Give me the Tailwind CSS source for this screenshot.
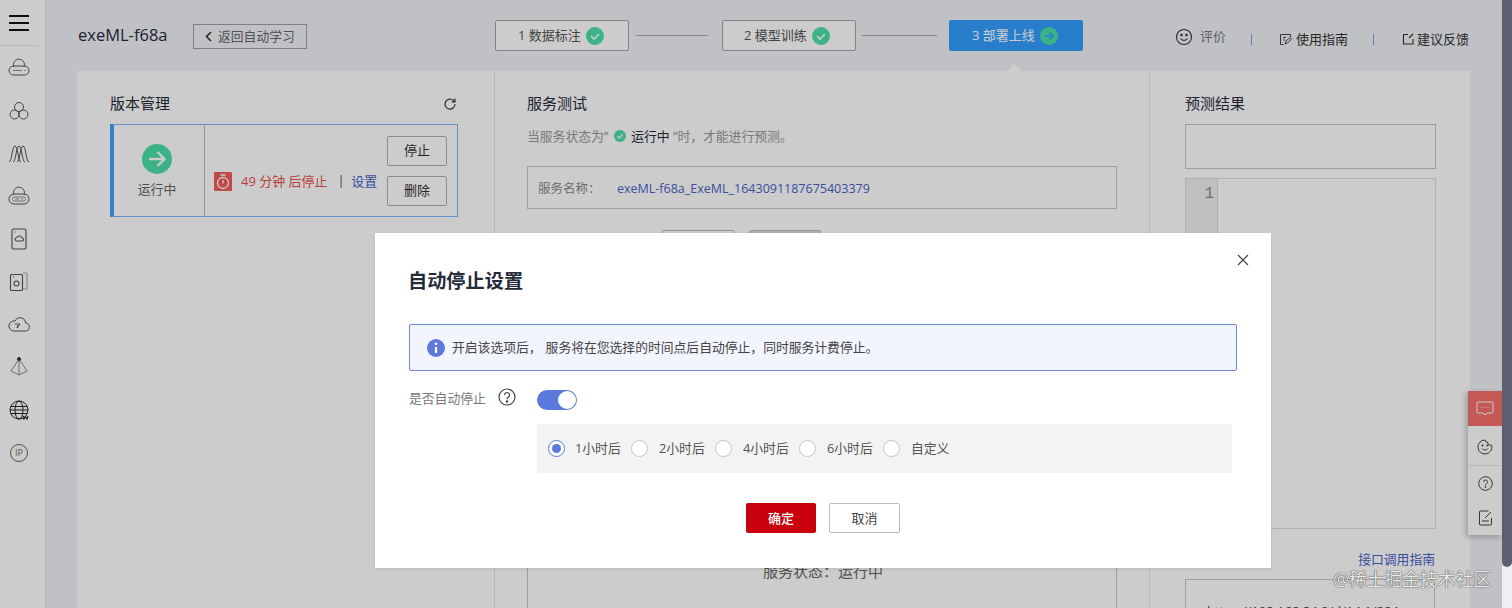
<!DOCTYPE html>
<html lang="zh">
<head>
    <meta charset="UTF-8">
    <title>自动停止设置</title>
    <script src="https://cdn.jsdelivr.net/npm/@tailwindcss/browser@4"></script>
</head>
<body class="font-['Open_Sans','Noto_Sans_CJK_SC',sans-serif] bg-[#f0f2f7] text-[#252b3a] overflow-hidden">
<div class="relative flex h-[608px] w-[1512px] overflow-hidden">

    <!-- sidebar -->
    <aside class="w-[45px] shrink-0 bg-white flex flex-col items-center text-[#333] shadow-[1px_0_2px_rgba(0,0,0,0.06)]">
        <div class="h-[46px] w-[38px] -ml-[7px] border-b border-[#e8e8e8] flex flex-col justify-center items-center gap-[5px] pt-[1px]">
            <span class="block w-[20px] h-[2px] bg-[#111]"></span>
            <span class="block w-[20px] h-[2px] bg-[#111]"></span>
            <span class="block w-[20px] h-[2px] bg-[#111]"></span>
        </div>
        <div class="w-[38px] -ml-[7px] pt-[1px] grid auto-rows-[42.700px] place-items-center">
            <svg class="w-[22px] h-[22px]" viewBox="0 0 22 22" fill="none" stroke="#555" stroke-width="1"><path d="M6 10a5.500 5.500 0 1 1 10 0"/><rect x="1" y="9" width="20" height="9" rx="4.500"/><path d="M5 13.500h9M16 13.500h1.500" stroke="#777" stroke-width=".8"/></svg>
            <svg class="w-[22px] h-[22px]" viewBox="0 0 22 22" fill="none" stroke="#555" stroke-width="1"><circle cx="11" cy="7" r="4.500"/><circle cx="6.500" cy="14.500" r="4.500"/><circle cx="15.500" cy="14.500" r="4.500"/></svg>
            <svg class="w-[22px] h-[19px]" viewBox="0 0 22 19" fill="none" stroke="#555" stroke-width="1"><path d="M1 18C4 18 4 2 7 2s3 16 6 16M5 18C8 18 8 2 11 2s3 16 6 16M9 18C12 18 12 2 15 2s3 16 6 16"/></svg>
            <svg class="w-[22px] h-[22px]" viewBox="0 0 22 22" fill="none" stroke="#555" stroke-width="1"><path d="M6 10a5.500 5.500 0 1 1 10 0"/><rect x="1" y="9" width="20" height="10" rx="5"/><rect x="4.500" y="12" width="13" height="4" rx="1.500" stroke="#777" stroke-width=".8"/><path d="M7 14h4M13 14h2" stroke="#777" stroke-width=".8"/></svg>
            <svg class="w-[18px] h-[22px]" viewBox="0 0 18 22" fill="none" stroke="#555" stroke-width="1.100"><rect x="2" y="1" width="14" height="20" rx="1.500"/><path d="M6.500 13h5.500a1.500 1.500 0 0 0 0-3 2.800 2.800 0 0 0-5.200-.5A1.800 1.800 0 0 0 6.500 13zM4.500 4h1"/></svg>
            <svg class="w-[20px] h-[22px]" viewBox="0 0 20 22" fill="none" stroke="#555" stroke-width="1.100"><rect x="1.500" y="3.500" width="12" height="16" rx="1"/><path d="M14 2h3a1 1 0 0 1 1 1v14a1 1 0 0 1-1 1h-3" stroke="#aaa"/><circle cx="7.500" cy="12.500" r="2.500"/><path d="M4 6h1"/></svg>
            <svg class="w-[22px] h-[20px]" viewBox="0 0 22 20" fill="none" stroke="#555" stroke-width="1"><path d="M5 17h12a4 4 0 0 0 .6-8 5.500 5.500 0 0 0-10.500-2A5 5 0 0 0 5 17z"/><path d="M7 10h5l-3 4 1-3"/></svg>
            <svg class="w-[20px] h-[22px]" viewBox="0 0 20 22" fill="none" stroke="#888" stroke-width="1"><path d="M10 3 2 15l8 4 8-4zM10 3v16"/><circle cx="10" cy="3" r="1.500" fill="#333" stroke="#333"/></svg>
            <svg class="w-[22px] h-[22px]" viewBox="0 0 22 22" fill="none" stroke="#222" stroke-width="1"><circle cx="11" cy="11" r="9"/><ellipse cx="11" cy="11" rx="4" ry="9"/><path d="M3 7.500h16M2 11h18M3 14.500h16"/><path d="m15 17 1 3 1.500-2 1.500 2 1-3" stroke-width="1.200"/></svg>
            <div class="w-[18px] h-[18px] rounded-full border border-[#666] flex items-center justify-center text-[9px] text-[#666] leading-none">IP</div>
        </div>
    </aside>

    <!-- main -->
    <main class="w-[1457px] shrink-0 px-[32px] flex flex-col">
        <header class="h-[71px] shrink-0 flex items-start">
            <div class="w-[418px] shrink-0 flex items-center h-[25px] mt-[24px]">
                <h1 class="w-[116px] pl-[1px] -mt-[3px] text-[16.500px] font-medium leading-[22px] whitespace-nowrap">exeML-f68a</h1>
                <div class="w-[114px] h-[25px] border border-[#9ea1a8] flex items-center pl-[11px] gap-[6px] text-[12.800px] text-[#666]">
                    <svg class="w-[7px] h-[11px]" viewBox="0 0 7 11" fill="none" stroke="#333" stroke-width="1.600"><path d="M6 1 1.500 5.500 6 10"/></svg>
                    <span class="whitespace-nowrap leading-none">返回自动学习</span>
                </div>
            </div>
            <div class="w-[588px] shrink-0 flex items-center mt-[20px] h-[31px]">
                <div class="w-[134px] h-[31px] bg-white border border-[#a4a6aa] rounded-[2px] flex items-center pl-[22px] gap-[5px] text-[13px] text-[#555]">
                    <span class="whitespace-nowrap leading-none">1 数据标注</span>
                    <svg class="w-[18px] h-[18px]" viewBox="0 0 18 18"><circle cx="9" cy="9" r="9" fill="#4cdfa9"/><path d="m5 9 3 3 5-5" fill="none" stroke="#fff" stroke-width="1.600"/></svg>
                </div>
                <span class="ml-[7px] w-[72px] h-px bg-[#a9abad]"></span>
                <div class="ml-[14px] w-[134px] h-[31px] bg-white border border-[#a4a6aa] rounded-[2px] flex items-center pl-[21px] gap-[5px] text-[13px] text-[#555]">
                    <span class="whitespace-nowrap leading-none">2 模型训练</span>
                    <svg class="w-[18px] h-[18px]" viewBox="0 0 18 18"><circle cx="9" cy="9" r="9" fill="#4cdfa9"/><path d="m5 9 3 3 5-5" fill="none" stroke="#fff" stroke-width="1.600"/></svg>
                </div>
                <span class="ml-[6px] w-[75px] h-px bg-[#a9abad]"></span>
                <div class="relative ml-[12px] w-[134px] h-[31px] bg-[#349eff] rounded-[2px] flex items-center pl-[23px] gap-[5px] text-[13px] text-white">
                    <span class="whitespace-nowrap leading-none">3 部署上线</span>
                    <svg class="w-[18px] h-[18px]" viewBox="0 0 18 18"><circle cx="9" cy="9" r="9" fill="#4cdfa9"/><path d="M4.500 9h8M9.500 5.500 13 9l-3.500 3.500" fill="none" stroke="#349eff" stroke-width="1.700"/></svg>
                    <span class="absolute left-[58px] top-[44px] w-0 h-0 border-x-[7px] border-x-transparent border-b-[7px] border-b-white"></span>
                </div>
            </div>
            <div class="flex-1 flex items-center text-[13px] text-[#333] mt-[28px] h-[20px] whitespace-nowrap leading-none">
                <svg class="ml-[92px] w-[18px] h-[18px] -mt-[3px]" viewBox="0 0 18 18" fill="none" stroke="#333" stroke-width="1.100"><circle cx="9" cy="9" r="7.500"/><path d="M5.500 10.500c1.500 2.500 5.500 2.500 7 0"/><circle cx="6.500" cy="7" r=".7" fill="#333"/><circle cx="11.500" cy="7" r=".7" fill="#333"/></svg>
                <span class="ml-[7px] -mt-[3px] text-[#777]">评价</span>
                <span class="ml-[25px] w-px h-[11px] bg-[#6ea2f0] mt-[3px]"></span>
                <svg class="ml-[27px] w-[13px] h-[13px] mt-[2px]" viewBox="0 0 13 13" fill="none" stroke="#444" stroke-width="1"><path d="M11.500 4V1.500h-10v10h3"/><path d="M4 4.500h3M4 7h2"/><path d="m6 11 1-3 4-3.500 1.500 1.500-4 4z"/></svg>
                <span class="ml-[4px] mt-[3px]">使用指南</span>
                <span class="ml-[25px] w-px h-[11px] bg-[#6ea2f0] mt-[3px]"></span>
                <svg class="ml-[28px] w-[12px] h-[12px] mt-[1px]" viewBox="0 0 12 12" fill="none" stroke="#333" stroke-width="1.100"><path d="M6 1.500H1.500v9.500h9.500V6"/><path d="m7 5 4-4"/></svg>
                <span class="ml-[3px] mt-[3px]">建议反馈</span>
            </div>
        </header>

        <div class="flex-1 flex bg-white">
            <!-- version panel -->
            <section class="w-[418px] shrink-0 border-r border-[#e5e5e5] pl-[33px] pr-[36px]">
                <div class="h-[53px] pt-[12px] flex items-center justify-between pr-[1px]">
                    <h2 class="text-[15px] leading-none">版本管理</h2>
                    <svg class="w-[14px] h-[14px]" viewBox="0 0 14 14" fill="none" stroke="#333" stroke-width="1.100"><path d="M12 7a5 5 0 1 1-1.500-3.500L12 5M12 1.500V5H8.500"/></svg>
                </div>
                <div class="h-[93px] border border-[#78b8fb] border-l-[4px] border-l-[#3a9fff] flex">
                    <div class="w-[91px] shrink-0 border-r border-[#bbb] flex flex-col items-center pt-[19px] pr-[4px]">
                        <svg class="w-[30px] h-[30px]" viewBox="0 0 30 30"><circle cx="15" cy="15" r="15" fill="#4cdfa9"/><path d="M7 15h15M15.500 8l7 7-7 7" fill="none" stroke="#fff" stroke-width="2.400"/></svg>
                        <span class="mt-[9px] text-[12.800px] text-[#666] leading-none">运行中</span>
                    </div>
                    <div class="flex-1 flex pl-[9px]">
                        <div class="flex items-center h-[20px] mt-[46px] text-[13px] whitespace-nowrap leading-none">
                            <svg class="w-[18px] h-[19px]" viewBox="0 0 18 19"><rect width="18" height="19" rx="1" fill="#f25c5c"/><circle cx="9" cy="11" r="5.500" fill="none" stroke="#fff" stroke-width="1.300"/><path d="M9 8v3.500M6.500 3h5" stroke="#fff" stroke-width="1.300"/></svg>
                            <span class="ml-[9px] text-[#e8504f]">49 分钟 后停止</span>
                            <span class="ml-[10px] text-[#444] text-[12px]">|</span>
                            <span class="ml-[7px] text-[#4a63c8]">设置</span>
                        </div>
                        <div class="ml-auto mr-[10px] flex flex-col gap-[10px] pt-[11px]">
                            <div class="w-[60px] h-[30px] border border-[#b0b0b0] rounded-[2px] flex items-center justify-center text-[13px] text-[#333]">停止</div>
                            <div class="w-[60px] h-[30px] border border-[#b0b0b0] rounded-[2px] flex items-center justify-center text-[13px] text-[#333]">删除</div>
                        </div>
                    </div>
                </div>
            </section>

            <!-- service test panel -->
            <section class="w-[655px] shrink-0 border-r border-[#e5e5e5] pl-[32px] pr-[32px] flex flex-col">
                <h2 class="h-[53px] pt-[12px] flex items-center text-[15px] leading-none">服务测试</h2>
                <p class="h-[20px] mt-[2px] flex items-center text-[12.800px] text-[#999] whitespace-nowrap leading-none">当服务状态为”
                    <svg class="ml-[6px] mr-[5px] w-[12px] h-[12px] -mt-[1px]" viewBox="0 0 12 12"><circle cx="6" cy="6" r="6" fill="#4cdfa9"/><path d="m3.300 6 2 2 3.400-3.500" fill="none" stroke="#fff" stroke-width="1.200"/></svg>
                    <span class="text-[#252b3a]">运行中</span>&nbsp;”时&#xFF0C;才能进行预测。</p>
                <div class="mt-[20px] h-[43px] border border-[#c9c9c9] flex items-center pl-[10px] pt-[3px] text-[12.500px] leading-none whitespace-nowrap">
                    <span class="w-[79px] text-[#888]">服务名称&#xFF1A;</span>
                    <span class="text-[#4a63c8]">exeML-f68a_ExeML_1643091187675403379</span>
                </div>
                <div class="mt-[21px] flex pl-[135px] gap-[14px]">
                    <div class="w-[73px] h-[30px] border border-[#bbb] rounded-[2px]"></div>
                    <div class="w-[72px] h-[30px] border border-[#bbb] bg-[#ddd] rounded-[2px]"></div>
                </div>
                <div class="mt-[35px] flex-1 border border-[#c9c9c9] min-h-[80px] relative">
                    <span class="absolute left-[235px] top-[268px] text-[15px] text-[#666] leading-none whitespace-nowrap">服务状态&#xFF1A;运行中</span>
                </div>
            </section>

            <!-- result panel -->
            <section class="flex-1 pl-[35px] pr-[34px] flex flex-col">
                <h2 class="h-[53px] pt-[12px] flex items-center text-[15px] leading-none">预测结果</h2>
                <div class="h-[45px] border border-[#c4c4c4]"></div>
                <div class="mt-[9px] h-[351px] border border-[#dcdcdc] flex">
                    <div class="w-[32px] bg-[#f0f0f0] border-r border-[#ddd] text-right pr-[3px] pt-[5px] font-['Liberation_Mono',monospace] text-[16px] text-[#888] leading-[20px]">1</div>
                </div>
                <a class="mt-[24px] mr-[1px] h-[16px] self-end text-[12.800px] text-[#4a63c8] leading-none whitespace-nowrap">接口调用指南</a>
                <div class="mt-[10px] mr-[1px] h-[60px] border border-[#c9c9c9] pl-[21px] pt-[25px] text-[13px] text-[#444] leading-none whitespace-nowrap overflow-hidden">https://192.168.24.0/d/14.1/884</div>
            </section>
        </div>
    </main>

    <!-- scrollbar -->
    <div class="w-[10px] shrink-0 bg-[#eef0f5]">
        <div class="h-[567px] bg-[#5d6070] rounded-b-[5px]"></div>
    </div>

    <!-- floating tools -->
    <div class="absolute left-[1468px] top-[391px] w-[34px] bg-white shadow-[-2px_2px_6px_rgba(0,0,0,0.25)] flex flex-col items-center">
        <div class="w-full h-[35px] bg-[#f66f6a] flex items-center justify-center">
            <svg class="w-[18px] h-[17px]" viewBox="0 0 18 17" fill="none" stroke="#fff" stroke-width="1"><path d="M2 2h14a1 1 0 0 1 1 1v9a1 1 0 0 1-1 1h-5l-2 2-2-2H2a1 1 0 0 1-1-1V3a1 1 0 0 1 1-1z"/><path d="M5.500 7.500h1M8.500 7.500h1M11.500 7.500h1"/></svg>
        </div>
        <div class="w-full h-[40px] border-b border-[#e5e5e5] flex items-center justify-center pt-[2px]">
            <svg class="w-[16px] h-[16px]" viewBox="0 0 16 16" fill="none" stroke="#444" stroke-width="1"><path d="M8 1a7 7 0 1 0 6.800 5.500L13 6a2 2 0 0 1-2-2.500A3 3 0 0 1 8 1z"/><path d="M5 9.500c1.500 2 4.500 2 6 0"/><circle cx="5.500" cy="6.500" r=".6" fill="#444"/><circle cx="10.500" cy="6.500" r=".6" fill="#444"/></svg>
        </div>
        <div class="w-full h-[35px] flex items-center justify-center">
            <svg class="w-[15px] h-[15px]" viewBox="0 0 15 15" fill="none" stroke="#444" stroke-width="1"><circle cx="7.500" cy="7.500" r="6.800"/><path d="M5.500 6a2 2 0 1 1 3 1.700c-.7.400-1 .8-1 1.600"/><circle cx="7.500" cy="11" r=".5" fill="#444"/></svg>
        </div>
        <div class="w-full h-[34px] flex items-center justify-center pb-[1px]">
            <svg class="w-[15px] h-[16px]" viewBox="0 0 15 16" fill="none" stroke="#444" stroke-width="1"><path d="M13.500 8v6a1 1 0 0 1-1 1h-10a1 1 0 0 1-1-1V2a1 1 0 0 1 1-1h8"/><path d="M4 11h7M7 8l6-6"/></svg>
        </div>
    </div>

    <!-- dialog mask -->
    <div class="absolute left-0 top-0 w-[1502px] h-full bg-black/20">
        <div class="absolute left-[375px] top-[233px] w-[896px] h-[335px] bg-white pl-[34px] pr-[34px] text-[12.800px] shadow-[0_1px_3px_rgba(0,0,0,0.1)]">
            <svg class="absolute right-[22px] top-[21px] w-[12px] h-[12px]" viewBox="0 0 12 12" fill="none" stroke="#444" stroke-width="1.200"><path d="m1 1 10 10M11 1 1 11"/></svg>
            <h3 class="h-[91px] -ml-[1px] flex items-center text-[19.200px] font-semibold leading-none pt-[5px]">自动停止设置</h3>
            <div class="w-[828px] h-[47px] bg-[#f2f5fd] border border-[#6f8ad8] rounded-[2px] flex items-center pl-[17px] text-[#444] whitespace-nowrap leading-none">
                <svg class="w-[18px] h-[18px] mr-[7px] shrink-0" viewBox="0 0 18 18"><circle cx="9" cy="9" r="9" fill="#5d7bdc"/><path d="M9 8v6" stroke="#fff" stroke-width="2.200"/><circle cx="9" cy="4.800" r="1.300" fill="#fff"/></svg>
                <span>开启该选项后&#xFF0C;</span><span class="ml-[4px]">服务将在您选择的时间点后自动停止&#xFF0C;同时服务计费停止。</span>
            </div>
            <div class="flex items-center h-[20px] mt-[19px] leading-none whitespace-nowrap">
                <span class="w-[89px] text-[#777] -mt-[3px]">是否自动停止</span>
                <svg class="w-[18px] h-[18px] -mt-[6px]" viewBox="0 0 18 18" fill="none" stroke="#444" stroke-width="1.200"><circle cx="9" cy="9" r="8"/><path d="M6.500 7a2.500 2.500 0 1 1 3.700 2.200c-.8.500-1.200 1-1.200 2"/><circle cx="9" cy="13.500" r=".7" fill="#444"/></svg>
                <span class="ml-[21px] w-[40px] h-[20px] bg-[#5b78dc] rounded-full flex items-center justify-end pr-[1px]">
                    <span class="block w-[18px] h-[18px] rounded-full bg-white"></span>
                </span>
            </div>
            <div class="ml-[128px] mt-[14px] w-[695px] h-[49px] bg-[#f3f3f3] flex items-center pl-[11px] leading-none whitespace-nowrap text-[#555]">
                <span class="w-[17px] h-[17px] rounded-full border border-[#5b78dc] bg-white flex items-center justify-center"><span class="block w-[9px] h-[9px] rounded-full bg-[#5b78dc]"></span></span>
                <span class="ml-[10px] w-[47px]">1小时后</span>
                <span class="ml-[9px] w-[17px] h-[17px] rounded-full border border-[#c4c4c4] bg-white"></span>
                <span class="ml-[11px] w-[46px]">2小时后</span>
                <span class="ml-[10px] w-[17px] h-[17px] rounded-full border border-[#c4c4c4] bg-white"></span>
                <span class="ml-[11px] w-[46px]">4小时后</span>
                <span class="ml-[10px] w-[17px] h-[17px] rounded-full border border-[#c4c4c4] bg-white"></span>
                <span class="ml-[11px] w-[46px]">6小时后</span>
                <span class="ml-[10px] w-[17px] h-[17px] rounded-full border border-[#c4c4c4] bg-white"></span>
                <span class="ml-[11px]">自定义</span>
            </div>
            <div class="flex justify-center gap-[13px] mt-[30px] text-[13px] leading-none">
                <div class="w-[70px] h-[30px] bg-[#c7000b] rounded-[2px] text-white font-medium flex items-center justify-center">确定</div>
                <div class="w-[71px] h-[30px] bg-white border border-[#bbb] rounded-[2px] text-[#444] flex items-center justify-center">取消</div>
            </div>
        </div>
    </div>

    <!-- watermark -->
    <span class="absolute left-[1333px] top-[569px] text-[17.800px] leading-[20px] text-[#e8e8e8] [text-shadow:0_0_1px_#444,0_0_1px_#444] whitespace-nowrap">@稀土掘金技术社区</span>
</div>
</body>
</html>
